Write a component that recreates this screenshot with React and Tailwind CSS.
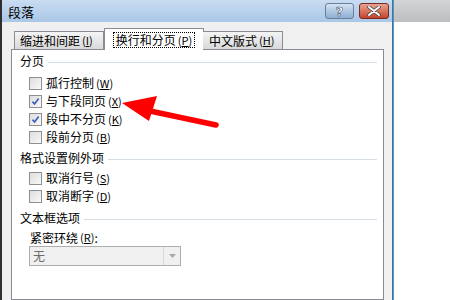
import React from "react";

const FONT = { fontFamily: '"Noto Sans CJK SC", "Noto Sans", sans-serif' };

function Key({ k }) {
  return (
    <span className="text-[11px] ml-[2px]">
      (<span className="underline">{k}</span>)
    </span>
  );
}

function Check({ checked, label, k }) {
  return (
    <div className="flex items-center h-[18px] pl-[9px]">
      <div className="w-[13px] h-[13px] border border-[#8e8f8f] bg-gradient-to-br from-[#dcdcdc] to-[#fbfbfb] p-[1px]">
        <div className="w-full h-full bg-gradient-to-br from-[#e0e0e0] to-[#f6f6f6] relative">
          {checked ? (
            <svg viewBox="0 0 9 9" className="absolute inset-0 w-full h-full">
              <path d="M1.5 4.6 L3.6 7 L7.6 1.6" fill="none" stroke="#3b5bbd" strokeWidth="1.6" />
            </svg>
          ) : null}
        </div>
      </div>
      <span className="ml-[4px] text-[12px] leading-none text-black">
        {label}
        <Key k={k} />
      </span>
    </div>
  );
}

function Heading({ children, className = "" }) {
  return (
    <div className={`flex items-center h-[18px] pr-[6px] ${className}`}>
      <span className="text-[12px] leading-none text-black">{children}</span>
      <div className="flex-1 h-px bg-[#d5dfe5] ml-[4px] mt-[3px]" />
    </div>
  );
}

export default function App() {
  return (
    <div className="w-[450px] h-[300px] bg-white flex overflow-hidden relative" style={FONT}>
      <div className="w-[394px] h-full flex flex-col border-l-2 border-[#2f2f2f] border-r border-r-[#3aa0e0]">
        <div className="h-[22px] flex items-center bg-gradient-to-b from-[#c9dcf1] to-[#aac7e7] pl-[6px] pr-[3px] border-r border-[#5d6a78]">
          <span className="text-[13px] text-black leading-none">段落</span>
          <div className="ml-auto flex gap-[5px]">
            <div className="w-[29px] h-[16px] rounded-[3px] border border-[#6d7f98] bg-gradient-to-b from-[#d4e3f3] to-[#8eaed3] flex items-center justify-center">
              <span className="text-[13px] font-bold text-white leading-none" style={{ fontFamily: '"DejaVu Sans", sans-serif', WebkitTextStroke: "0.6px #4a5a70" }}>?</span>
            </div>
            <div className="w-[30px] h-[16px] rounded-[3px] border border-[#7a2a22] bg-gradient-to-b from-[#e8a392] to-[#c2432c] flex items-center justify-center">
              <svg viewBox="0 0 14 10" className="w-[14px] h-[10px]">
                <path d="M2 1 L12 9 M12 1 L2 9" stroke="#3d3d3d" strokeWidth="3.4" strokeLinecap="round" />
                <path d="M2 1 L12 9 M12 1 L2 9" stroke="#ffffff" strokeWidth="2" strokeLinecap="round" />
              </svg>
            </div>
          </div>
        </div>

        <div className="flex-1 bg-[#f0f0f0] border-r border-[#5d6a78] pl-[9px] pr-[8px] pt-[6px] flex flex-col">
          <div className="flex items-end h-[21px] pl-[3px] relative z-10">
            <div className="w-[90px] h-[18px] border border-[#898c95] border-b-0 bg-gradient-to-b from-[#f4f4f4] to-[#d9d9d9] flex items-center pl-[5px] text-[12px] leading-none mr-[1px]">
              缩进和间距<Key k="I" />
            </div>
            <div className="w-[100px] h-[22px] -mb-px border border-[#898c95] border-b-0 bg-white flex items-center justify-center text-[12px] leading-none -mx-[1px]">
              <span className="outline outline-1 outline-dotted outline-black px-[2px] py-[1px]">
                换行和分页<Key k="P" />
              </span>
            </div>
            <div className="w-[80px] h-[18px] border border-[#898c95] border-b-0 border-l-0 bg-gradient-to-b from-[#f4f4f4] to-[#d9d9d9] flex items-center pl-[6px] text-[12px] leading-none">
              中文版式<Key k="H" />
            </div>
          </div>

          <div className="flex-1 bg-white border border-[#898c95] pl-[8px] pt-[2px]">
            <Heading>分页</Heading>
            <div className="mt-[4px]">
              <Check label="孤行控制" k="W" />
              <Check checked label="与下段同页" k="X" />
              <Check checked label="段中不分页" k="K" />
              <Check label="段前分页" k="B" />
            </div>
            <Heading className="mt-[3px]">格式设置例外项</Heading>
            <div className="mt-[2px]">
              <Check label="取消行号" k="S" />
              <Check label="取消断字" k="D" />
            </div>
            <Heading className="mt-[4px]">文本框选项</Heading>
            <div className="pl-[10px] mt-[2px] h-[17px] flex items-center text-[12px] leading-none">
              紧密环绕<Key k="R" />:
            </div>
            <div className="ml-[9px] w-[152px] h-[20px] border border-[#adadad] bg-[#f0f0f0] flex items-center">
              <span className="pl-[3px] text-[12px] leading-none text-[#6d6d6d]">无</span>
              <div className="ml-auto w-[17px] h-full border-l border-[#dadada] flex items-center justify-center">
                <svg viewBox="0 0 7 4" className="w-[7px] h-[4px]">
                  <path d="M0 0 L7 0 L3.5 4 Z" fill="#a8a8a8" />
                </svg>
              </div>
            </div>
          </div>
        </div>
      </div>

      <div className="flex-1 flex flex-col">
        <div className="h-[22px] bg-gradient-to-b from-[#d2d4d6] to-[#bcbec0]" />
        <div className="flex-1 bg-white" />
      </div>

      <svg className="absolute left-0 top-0 pointer-events-none" width="450" height="300" viewBox="0 0 450 300">
        <line x1="150" y1="111" x2="216" y2="125" stroke="#ff0000" strokeWidth="5.5" strokeLinecap="round" />
        <polygon points="122,103 157,96 149,121" fill="#ff0000" />
      </svg>
    </div>
  );
}
